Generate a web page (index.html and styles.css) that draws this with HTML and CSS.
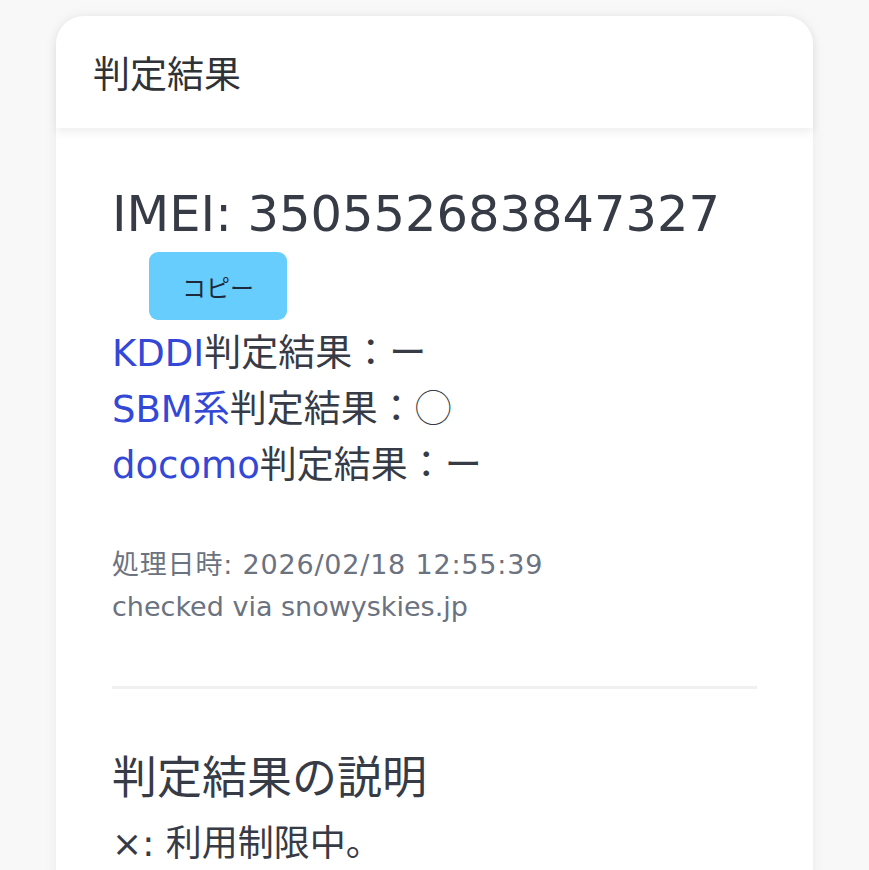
FILE: index.html
```html
<!DOCTYPE html>
<html lang="ja">
<head>
  <meta charset="UTF-8">
  <title>判定結果</title>
  <link rel="stylesheet" href="styles.css">
</head>
<body>

  <div class="card">
    <div class="card-header">判定結果</div>

    <div class="card-body">
      <div class="imei">IMEI: 350552683847327</div>
      <button class="copy-btn">コピー</button>

      <div class="results">
        <div><a href="#">KDDI</a>判定結果：ー</div>
        <div><a href="#">SBM系</a>判定結果：<span class="mark">◯</span></div>
        <div><a href="#">docomo</a>判定結果：ー</div>
      </div>

      <div class="meta">
        <div class="date">処理日時: 2026/02/18 12:55:39</div>
        <div>checked via snowyskies.jp</div>
      </div>

      <hr class="divider">

      <h2>判定結果の説明</h2>
      <p class="desc">×: 利用制限中。</p>
    </div>
  </div>

</body>
</html>
```

FILE: styles.css
```css
body {
  margin: 0;
  padding-top: 16px;
  background: #f8f8f8;
  font-family: "DejaVu Sans", "Noto Sans CJK JP", sans-serif;
  color: #363b46;
}

.card {
  margin-left: 56px;
  width: 757px;
  background: #fff;
  border-radius: 28px 28px 0 0;
  box-shadow: 0 0 14px rgba(0,0,0,0.06);
}

.card-header {
  height: 112px;
  display: flex;
  align-items: center;
  padding-left: 37px;
  font-size: 37px;
  font-family: "Noto Sans CJK JP", sans-serif;
  color: #2f3237;
  border-radius: 28px 28px 0 0;
  box-shadow: 0 4px 10px rgba(0,0,0,0.07);
  position: relative;
}

.card-body {
  padding: 56px 56px 40px;
}

.imei {
  font-size: 49.5px;
  line-height: 60px;
}

.copy-btn {
  display: block;
  margin: 8px 0 0 37px;
  width: 138px;
  height: 68px;
  border: none;
  border-radius: 9px;
  background: #67cdfc;
  color: #1e293b;
  font-family: "Noto Sans CJK JP", sans-serif;
  font-size: 24px;
}

.results {
  font-size: 37px;
  line-height: 56px;
  margin-top: 6px;
}

.results a {
  color: #3348d6;
  text-decoration: none;
}

.mark {
  font-family: "Noto Sans CJK JP", sans-serif;
  font-weight: 300;
  line-height: 0;
}

.meta {
  margin-top: 50px;
  font-size: 27px;
  line-height: 42px;
  color: #6b7280;
}

.date {
  letter-spacing: 0.8px;
}

.divider {
  margin: 58px 0 0;
  border: none;
  height: 3px;
  background: #f0f0f1;
}

h2 {
  margin: 60px 0 0;
  font-size: 45px;
  font-weight: normal;
  line-height: 60px;
}

.desc {
  margin: 7px 0 0;
  font-size: 36px;
  line-height: 56px;
}
```
